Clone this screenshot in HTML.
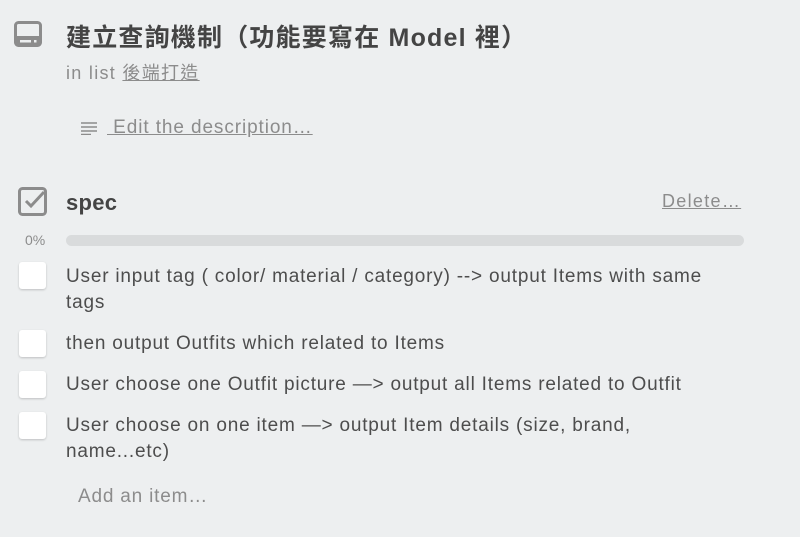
<!DOCTYPE html>
<html><head><meta charset="utf-8"><style>
body{margin:0;width:800px;height:537px;background:#edeff0;font-family:"Liberation Sans","Noto Sans CJK TC",sans-serif;color:#4d4d4d;position:relative;overflow:hidden}
.a{position:absolute;white-space:nowrap}
.cb{position:absolute;left:19px;width:27px;height:27px;background:#fff;border-radius:3px;box-shadow:0 1px 2px rgba(0,0,0,.2)}
.t{position:absolute;left:66px;font-size:19px;letter-spacing:0.8px;line-height:26px;color:#4d4d4d;white-space:nowrap}
</style></head><body>
<svg class="a" style="left:14px;top:21px" width="30" height="27" viewBox="0 0 30 27"><rect x="1.5" y="1.5" width="25" height="23" rx="3" fill="none" stroke="#8c8c8c" stroke-width="3"/><rect x="3" y="15" width="22" height="3" fill="#8c8c8c"/><rect x="3" y="17" width="22" height="7" fill="#8c8c8c"/><rect x="6" y="19" width="11" height="2.5" fill="#edeff0"/><rect x="20" y="19" width="2.5" height="2.5" fill="#edeff0"/></svg>
<div class="a" style="left:66px;top:18px;font-size:25px;letter-spacing:1.2px;font-weight:bold;color:#444">建立查詢機制（功能要寫在 Model 裡）</div>
<div class="a" style="left:66px;top:59px;font-size:18px;letter-spacing:1.3px;color:#8c8c8c">in list <span style="text-decoration:underline">後端打造</span></div>
<svg class="a" style="left:80px;top:121px" width="18" height="14"><g stroke="#8c8c8c" stroke-width="1.5"><line x1="1" y1="2" x2="17" y2="2"/><line x1="1" y1="6" x2="17" y2="6"/><line x1="1" y1="10" x2="17" y2="10"/><line x1="1" y1="13.5" x2="11" y2="13.5"/></g></svg>
<div class="a" style="left:107px;top:117px;font-size:19px;letter-spacing:0.9px;color:#8c8c8c;text-decoration:underline">&nbsp;Edit the description…</div>
<svg class="a" style="left:17px;top:186px" width="32" height="32"><rect x="2.5" y="2.5" width="26" height="26" rx="3" fill="none" stroke="#8c8c8c" stroke-width="3"/><path d="M9 15 L14 20 L27 6" fill="none" stroke="#8c8c8c" stroke-width="3"/></svg>
<div class="a" style="left:66px;top:190px;font-size:22px;letter-spacing:0.3px;font-weight:bold;color:#444">spec</div>
<div class="a" style="left:662px;top:191px;font-size:18px;letter-spacing:1.3px;color:#8c8c8c;text-decoration:underline">Delete…</div>
<div class="a" style="left:25px;top:232px;font-size:14px;color:#8c8c8c">0%</div>
<div class="a" style="left:66px;top:235px;width:678px;height:11px;border-radius:6px;background:#d9dbdc"></div>
<div class="cb" style="top:262px"></div>
<div class="t" style="top:264px">User input tag ( color/ material / category) --&gt; output Items with same<br>tags</div>
<div class="cb" style="top:330px"></div>
<div class="t" style="top:331px">then output Outfits which related to Items</div>
<div class="cb" style="top:371px"></div>
<div class="t" style="top:372px">User choose one Outfit picture —&gt; output all Items related to Outfit</div>
<div class="cb" style="top:412px"></div>
<div class="t" style="top:413px">User choose on one item —&gt; output Item details (size, brand,<br>name...etc)</div>
<div class="a" style="left:78px;top:486px;font-size:19px;letter-spacing:0.8px;color:#8c8c8c">Add an item…</div>
</body></html>
